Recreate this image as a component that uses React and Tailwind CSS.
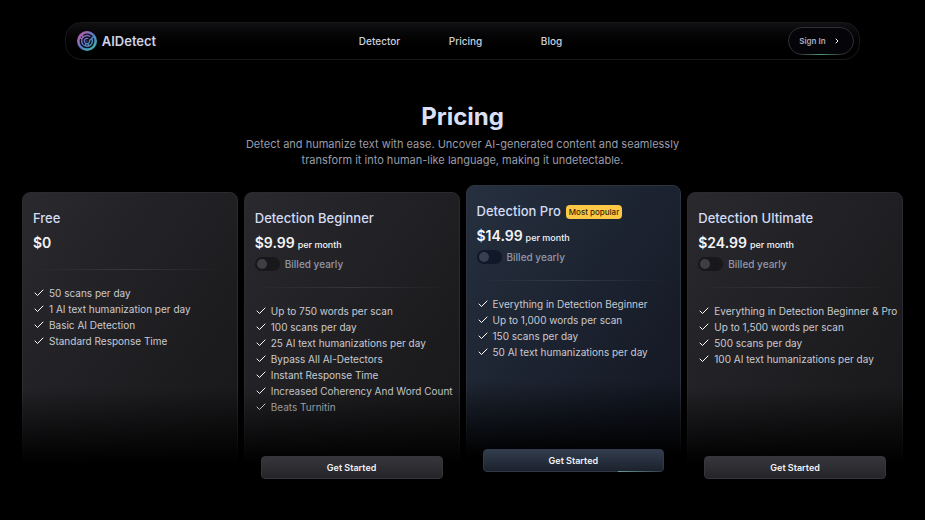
import React from 'react'
import clsx from 'clsx'
import { Check, ChevronRight, Radar } from 'lucide-react'

const links = ['Detector', 'Pricing', 'Blog']

const plans = [
  {
    name: 'Free',
    price: '$0',
    features: [
      '50 scans per day',
      '1 AI text humanization per day',
      'Basic AI Detection',
      'Standard Response Time'
    ]
  },
  {
    name: 'Detection Beginner',
    price: '$9.99',
    paid: true,
    features: [
      'Up to 750 words per scan',
      '100 scans per day',
      '25 AI text humanizations per day',
      'Bypass All AI-Detectors',
      'Instant Response Time',
      'Increased Coherency And Word Count',
      'Beats Turnitin'
    ]
  },
  {
    name: 'Detection Pro',
    price: '$14.99',
    paid: true,
    popular: true,
    features: [
      'Everything in Detection Beginner',
      'Up to 1,000 words per scan',
      '150 scans per day',
      '50 AI text humanizations per day'
    ]
  },
  {
    name: 'Detection Ultimate',
    price: '$24.99',
    paid: true,
    features: [
      'Everything in Detection Beginner & Pro',
      'Up to 1,500 words per scan',
      '500 scans per day',
      '100 AI text humanizations per day'
    ]
  }
]

const Navbar = () => (
  <header className="mx-[7%] grid grid-cols-[1fr_auto_1fr] items-center rounded-2xl border border-[#18181b] bg-linear-to-b from-[#111114] to-black py-1 pr-[5px] pl-[11px]">
    <a href="#" className="flex items-center gap-[5px]">
      <span className="flex h-5 w-5 items-center justify-center rounded-full bg-linear-to-br from-[#d04a9c] via-[#5577c8] to-[#2fc48d]">
        <Radar className="h-4 w-4 text-[#10101c]" strokeWidth={2} />
      </span>
      <span className="text-[13px] leading-5 font-semibold text-[#cfd3e4]">AIDetect</span>
    </a>
    <nav className="flex">
      {links.map((link) => (
        <a key={link} href="#" className="w-[86px] text-center text-[10px] leading-4 font-medium text-[#cdd0da]">
          {link}
        </a>
      ))}
    </nav>
    <button className="relative flex h-7 w-[66px] items-center justify-between justify-self-end rounded-full border border-[#303036] bg-[#050509] pr-3 pl-[10px] text-[8px] font-semibold text-[#a9adbd]">
      Sign In
      <ChevronRight className="h-2 w-2 text-white" strokeWidth={3} />
      <span className="absolute inset-x-3 -bottom-px h-px bg-linear-to-r from-transparent via-[#4d9b73] to-transparent" />
    </button>
  </header>
)

const PlanCard = ({ plan }) => (
  <div
    className={clsx(
      'relative flex flex-col rounded-lg border px-[10px] pt-4 pb-4',
      plan.popular
        ? '-mt-[7px] mb-[7px] border-[#2c3440] bg-linear-to-br from-[#26303f] to-[#11141f]'
        : 'border-[#2b2b2f] bg-linear-to-br from-[#29292e] to-[#161618]'
    )}
  >
    <div className="flex h-5 items-center gap-[5px]">
      <h2 className="text-[13px] font-medium text-[#d3dcf5]">{plan.name}</h2>
      {plan.popular && (
        <span className="rounded-sm bg-[#fdc845] px-[3px] text-[8px] leading-[14px] font-medium text-[#3b2705]">
          Most popular
        </span>
      )}
    </div>
    <p className="mt-1 flex items-baseline gap-[3px] text-[#f4f4f6]">
      <span className="text-sm leading-5 font-semibold">{plan.price}</span>
      {plan.paid && <span className="text-[9px] leading-4 font-medium">per month</span>}
    </p>
    {plan.paid && (
      <label className="mt-1 flex h-[14px] items-center gap-[5px] text-[10px] font-medium text-[#9297a8]">
        <input
          type="checkbox"
          role="switch"
          className={clsx(
            'h-[14px] w-[25px] appearance-none rounded-full p-[2px] before:block before:h-[10px] before:w-[10px] before:rounded-full checked:before:ml-auto',
            plan.popular ? 'bg-[#111827] before:bg-[#364050]' : 'bg-[#18181a] before:bg-[#3f3f43]'
          )}
        />
        Billed yearly
      </label>
    )}
    <hr className="mt-4 h-px border-0 bg-linear-to-r from-transparent via-white/10 to-transparent" />
    <ul className="mt-[15px] text-[10px] leading-4 text-[#c9cad1]">
      {plan.features.map((feature) => (
        <li key={feature} className="flex items-center gap-1 whitespace-nowrap">
          <Check className="h-3 w-3 shrink-0 text-white" strokeWidth={2} />
          {feature}
        </li>
      ))}
    </ul>

    {/* Fades the lower part of the card into the page */}
    <div className="pointer-events-none absolute -inset-x-px -bottom-px h-[108px] bg-linear-to-b from-transparent via-black via-70% to-black" />

    {plan.paid && (
      <div className="relative mt-auto px-[6px] pt-[41px]">
        <button
          className={clsx(
            'relative block h-[23px] w-full rounded border text-[9px] font-semibold text-[#f1f2f6]',
            plan.popular
              ? 'border-[#303a48] bg-linear-to-b from-[#323d4e] to-[#1c222d]'
              : 'border-[#35353a] bg-linear-to-b from-[#36363c] to-[#242428]'
          )}
        >
          Get Started
          {plan.popular && (
            <span className="absolute right-0 -bottom-px h-px w-1/4 bg-linear-to-r from-[#6f9a92] to-transparent" />
          )}
        </button>
      </div>
    )}
  </div>
)

const App = () => {
  return (
    <div className="min-h-screen bg-black pt-[22px] font-['Inter',sans-serif]">
      <Navbar />
      <main className="px-[22px]">
        <div className="mx-auto mt-[41px] max-w-[440px] text-center">
          <h1 className="text-2xl font-bold text-[#dbe0f7]">Pricing</h1>
          <p className="mt-[3px] text-[11px] leading-4 text-[#9a9ca9]">
            Detect and humanize text with ease. Uncover AI-generated content and seamlessly
            transform it into human-like language, making it undetectable.
          </p>
        </div>
        <div className="mt-6 grid grid-cols-4 gap-[6px]">
          {plans.map((plan) => (
            <PlanCard key={plan.name} plan={plan} />
          ))}
        </div>
      </main>
    </div>
  )
}

export default App
